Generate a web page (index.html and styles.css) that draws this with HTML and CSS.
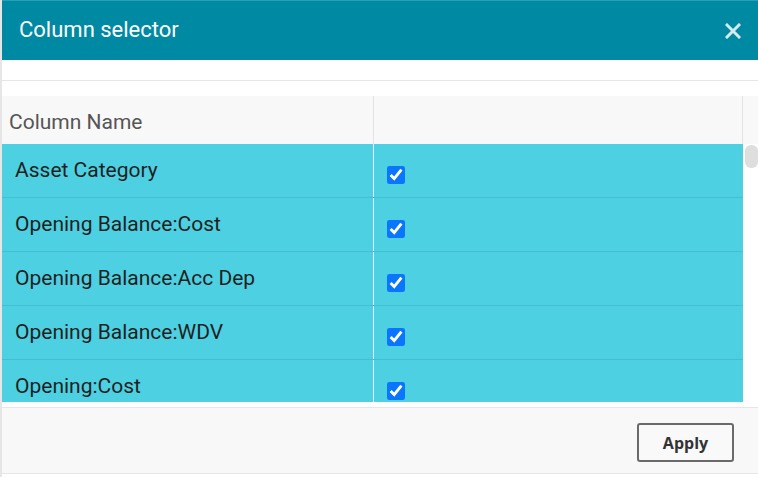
FILE: index.html
```html
<!DOCTYPE html>
<html lang="en">
<head>
    <meta charset="UTF-8">
    <meta name="viewport" content="width=device-width, initial-scale=1.0">
    <title>Column selector</title>
    <link rel="stylesheet" href="styles.css">
</head>
<body>
    <div class="modal">
        <div class="modal-header">
            <h1 class="modal-title">Column selector</h1>
            <button class="close-btn" aria-label="Close">
                <svg width="16" height="16" viewBox="0 0 16 16">
                    <path d="M2 2 L14 14 M14 2 L2 14" stroke="#d4ecf1" stroke-width="3" stroke-linecap="square"/>
                </svg>
            </button>
        </div>

        <div class="modal-body">
            <div class="grid">
                <div class="grid-head">
                    <div class="col-name">Column Name</div>
                    <div class="col-check"></div>
                    <div class="col-scroll"></div>
                </div>
                <div class="grid-main">
                    <div class="rows">
                        <div class="row">
                            <div class="cell-name">Asset Category</div>
                            <div class="cell-check"><input type="checkbox" checked></div>
                        </div>
                        <div class="row">
                            <div class="cell-name">Opening Balance:Cost</div>
                            <div class="cell-check"><input type="checkbox" checked></div>
                        </div>
                        <div class="row">
                            <div class="cell-name">Opening Balance:Acc Dep</div>
                            <div class="cell-check"><input type="checkbox" checked></div>
                        </div>
                        <div class="row">
                            <div class="cell-name">Opening Balance:WDV</div>
                            <div class="cell-check"><input type="checkbox" checked></div>
                        </div>
                        <div class="row">
                            <div class="cell-name">Opening:Cost</div>
                            <div class="cell-check"><input type="checkbox" checked></div>
                        </div>
                    </div>
                    <div class="scroll-track">
                        <div class="scroll-thumb"></div>
                    </div>
                </div>
            </div>
        </div>

        <div class="modal-footer">
            <button class="apply-btn">Apply</button>
        </div>
    </div>
</body>
</html>
```

FILE: styles.css
```css
body {
    margin: 0;
    background-color: #ffffff;
    font-family: Roboto, "Liberation Sans", sans-serif;
}

.modal {
    width: 756px;
    height: 477px;
    border-left: 2px solid #e6e6e6;
    display: flex;
    flex-direction: column;
}

.modal-header {
    height: 60px;
    background-color: #0089a3;
    border-top: 1px solid #2aa0b6;
    box-sizing: border-box;
    display: flex;
    align-items: center;
    justify-content: space-between;
    padding: 0 17px 0 17px;
}

.modal-title {
    margin: 0 0 2px 0;
    color: #ffffff;
    font-size: 22px;
    font-weight: 400;
}

.close-btn {
    background: none;
    border: none;
    padding: 0;
    margin-top: 1px;
    display: flex;
    cursor: pointer;
}

.modal-body {
    padding-top: 20px;
}

.grid {
    border-top: 1px solid #e6e6e6;
    padding-top: 15px;
}

.grid-head {
    display: flex;
    height: 48px;
    background-color: #f8f8f8;
    color: #555555;
    font-size: 21px;
}

.col-name {
    width: 364px;
    padding: 14px 0 0 7px;
    border-right: 1px solid #e3e3e3;
}

.col-check {
    width: 368px;
    border-right: 1px solid #e3e3e3;
}

.col-scroll {
    flex: 1;
}

.grid-main {
    display: flex;
    height: 258px;
}

.rows {
    width: 741px;
    overflow: hidden;
    background-color: #4dd0e1;
}

.row {
    display: flex;
    height: 53px;
    border-bottom: 1px solid #45bfd0;
}

.cell-name {
    width: 358px;
    padding: 14px 0 0 13px;
    color: #1f1f1f;
    font-size: 21px;
    border-right: 1px solid #e6f8fb;
}

.cell-check {
    flex: 1;
    padding: 22px 0 0 13px;
}

.cell-check input {
    width: 18px;
    height: 18px;
    margin: 0;
    accent-color: #0a75ff;
}

.scroll-track {
    flex: 1;
    padding: 1px 0 0 2px;
}

.scroll-thumb {
    width: 13px;
    height: 23px;
    background-color: #dedede;
    border-radius: 6px;
}

.modal-footer {
    margin-top: 5px;
    height: 67px;
    background-color: #f8f8f8;
    border-top: 1px solid #e6e6e6;
    border-bottom: 1px solid #e6e6e6;
    display: flex;
    justify-content: flex-end;
    align-items: flex-start;
    padding: 15px 24px 0 0;
    box-sizing: border-box;
}

.apply-btn {
    width: 97px;
    height: 39px;
    background-color: #f9f9f9;
    border: 2px solid #6a6a6a;
    border-radius: 3px;
    font-family: "Open Sans", "Liberation Sans", sans-serif;
    font-weight: 700;
    font-size: 16px;
    color: #333333;
    cursor: pointer;
}
```
